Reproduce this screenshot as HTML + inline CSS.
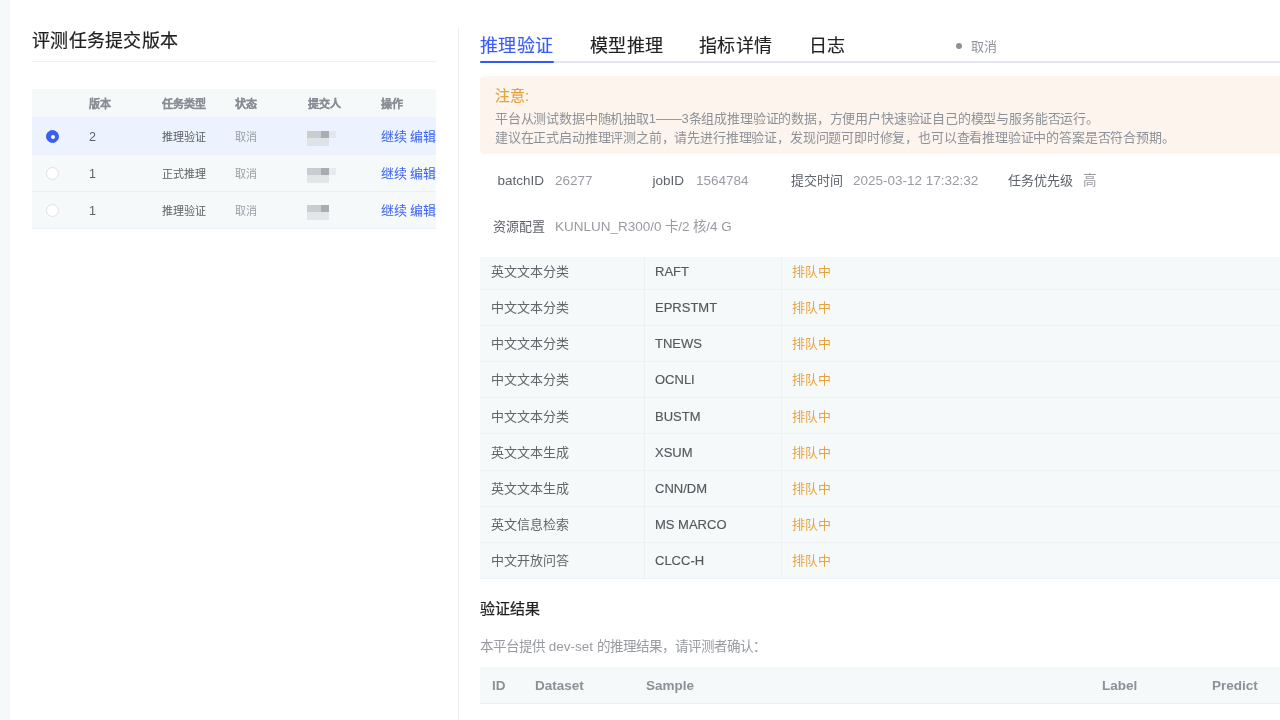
<!DOCTYPE html>
<html lang="zh-CN"><head><meta charset="utf-8">
<style>
*{margin:0;padding:0;box-sizing:border-box}
html,body{width:1280px;height:720px;overflow:hidden;background:#fff;font-family:"Liberation Sans",sans-serif}
.a{position:absolute;white-space:nowrap}
#strip{left:0;top:0;width:10px;height:720px;background:#f5f9fa}
#vdiv{left:458px;top:27px;width:1px;height:693px;background:#eceef1}
.title{left:32px;top:30px;font-size:18px;line-height:22px;color:#1f1f1f;letter-spacing:0.3px;-webkit-text-stroke:0.2px #1f1f1f}
.hline{left:32px;top:61px;width:404px;height:1px;background:#eef0f3}
.lt{left:32px;width:404px;overflow:hidden}
.lth{top:89px;height:29px;background:#f6f9fa;border-bottom:1px solid #eef1f5}
.lth span{position:absolute;top:7.5px;font-size:11px;line-height:14px;color:#8a8e96;font-weight:bold;-webkit-text-stroke:0.25px #8a8e96}
.lr{height:37px;background:#f6f9fa;border-bottom:1px solid #eef1f4}
.lr.sel{background:#ecf3fe}
.lr span{position:absolute;top:11.5px;font-size:11px;line-height:14px;color:#5d6066}
.lr .c{color:#9a9da3}
.lr .lk{color:#3b62f4;font-size:13px;top:10px;line-height:17px;word-spacing:-0.7px}
.radio{position:absolute;left:14px;top:12px;width:13px;height:13px;border-radius:50%;border:1px solid #dfe2e6;background:#fff}
.radio.on{background:#3a5ff0;border-color:#3a5ff0}
.radio.on:after{content:"";position:absolute;left:3.5px;top:3.5px;width:4px;height:4px;border-radius:50%;background:#fff}
.blur{position:absolute;left:275px;top:13px;width:29px;height:15px}
.blur i{position:absolute;display:block}

.tab{top:34px;font-size:18px;line-height:24px;color:#222;letter-spacing:0.4px;-webkit-text-stroke:0.15px #222}
.tab.on{color:#3a5cf4;-webkit-text-stroke:0.15px #3a5cf4}
#tabline{left:480px;top:61px;width:800px;height:2px;background:#e3e6ee}
#tabon{left:480px;top:61px;width:74px;height:2px;background:#2f5af5;border-radius:1px}
.notice{left:480px;top:76px;width:820px;height:78px;background:#fdf5ed;border-radius:4px}
.n1{left:495px;top:85.5px;font-size:15px;line-height:19px;color:#e9a23b;-webkit-text-stroke:0.2px #e9a23b}
.n2{left:495px;top:109px;font-size:13px;line-height:19px;color:#8e9198;letter-spacing:-0.18px}
.lab{font-size:13.5px;line-height:18px;color:#5f636a;top:172px}
.val{font-size:13.5px;line-height:18px;color:#989ba1;top:172px}
.rt{left:480px;top:256.6px;width:800px;height:321.4px;background:#f6f9fa;overflow:hidden}
.rt span{position:absolute;font-size:13px;line-height:18px;color:#626569}
.rb{position:absolute;left:0;width:800px;height:1px;background:#eef1f4}
.rbb{left:480px;width:800px;height:1px;background:#edf0f4}
.rt .q{color:#e8a33d}
.rt .en{color:#55585d;-webkit-text-stroke:0.15px #55585d}
.cd{position:absolute;top:0;width:1px;height:322px;background:#edf0f4}
.h2{left:480px;top:599px;font-size:15px;line-height:20px;color:#1f1f1f;-webkit-text-stroke:0.25px #1f1f1f}
.sub{left:480px;top:638px;font-size:13.5px;line-height:18px;color:#989ba1}
.rth{left:480px;top:667px;width:800px;height:37px;background:#f6f9fa;border-bottom:1px solid #eef0f4}
.rth span{position:absolute;top:10px;font-size:13.5px;line-height:18px;color:#8c9098;font-weight:bold}
</style></head><body>
<div id="wrap" style="position:absolute;left:0;top:0;width:1280px;height:720px;will-change:transform">
<div class="a" id="strip"></div>
<div class="a" id="vdiv"></div>

<div class="a title">评测任务提交版本</div>
<div class="a hline"></div>

<div class="a lt lth">
  <span style="left:57px">版本</span>
  <span style="left:130px">任务类型</span>
  <span style="left:203px">状态</span>
  <span style="left:276px">提交人</span>
  <span style="left:349px">操作</span>
</div>
<div class="a lt" style="top:118px">
  <div class="lr sel" style="position:relative">
    <div class="radio on"></div>
    <span style="left:57px;font-size:12.5px;top:11.5px">2</span>
    <span style="left:130px">推理验证</span>
    <span class="c" style="left:203px">取消</span>
    <div class="blur"><i style="left:0;top:0;width:14px;height:7px;background:#c9ccd1"></i><i style="left:14px;top:0;width:8px;height:7px;background:#a9acb1"></i><i style="left:22px;top:0;width:7px;height:7px;background:#e3e6ea"></i><i style="left:0;top:7px;width:22px;height:8px;background:#dfe2e6"></i></div>
    <span class="lk" style="left:349px">继续 编辑</span>
  </div>
  <div class="lr" style="position:relative">
    <div class="radio"></div>
    <span style="left:57px;font-size:12.5px;top:11.5px">1</span>
    <span style="left:130px">正式推理</span>
    <span class="c" style="left:203px">取消</span>
    <div class="blur"><i style="left:0;top:0;width:14px;height:7px;background:#c9ccd1"></i><i style="left:14px;top:0;width:8px;height:7px;background:#a9acb1"></i><i style="left:22px;top:0;width:7px;height:7px;background:#e8eaed"></i><i style="left:0;top:7px;width:22px;height:8px;background:#e3e5e8"></i></div>
    <span class="lk" style="left:349px">继续 编辑</span>
  </div>
  <div class="lr" style="position:relative">
    <div class="radio"></div>
    <span style="left:57px;font-size:12.5px;top:11.5px">1</span>
    <span style="left:130px">推理验证</span>
    <span class="c" style="left:203px">取消</span>
    <div class="blur"><i style="left:0;top:0;width:14px;height:7px;background:#c9ccd1"></i><i style="left:14px;top:0;width:8px;height:7px;background:#a9acb1"></i><i style="left:0;top:7px;width:22px;height:8px;background:#e3e5e8"></i></div>
    <span class="lk" style="left:349px">继续 编辑</span>
  </div>
</div>

<div class="a" id="tabline"></div>
<div class="a" id="tabon"></div>
<div class="a tab on" style="left:480px">推理验证</div>
<div class="a tab" style="left:590px">模型推理</div>
<div class="a tab" style="left:699px">指标详情</div>
<div class="a tab" style="left:809px">日志</div>
<div class="a" style="left:956px;top:43px;width:6px;height:6px;border-radius:50%;background:#8e9198"></div>
<div class="a" style="left:971px;top:37.5px;font-size:13px;line-height:17px;color:#8e9198">取消</div>

<div class="a notice"></div>
<div class="a n1">注意:</div>
<div class="a n2">平台从测试数据中随机抽取1——3条组成推理验证的数据，方便用户快速验证自己的模型与服务能否运行。<br>建议在正式启动推理评测之前，请先进行推理验证，发现问题可即时修复，也可以查看推理验证中的答案是否符合预期。</div>

<div class="a lab" style="right:736px">batchID</div>
<div class="a val" style="left:555px">26277</div>
<div class="a lab" style="right:596px">jobID</div>
<div class="a val" style="left:696px">1564784</div>
<div class="a lab" style="left:791px;font-size:13px">提交时间</div>
<div class="a val" style="left:853px">2025-03-12 17:32:32</div>
<div class="a lab" style="left:1008px;font-size:13px">任务优先级</div>
<div class="a val" style="left:1083px">高</div>
<div class="a lab" style="right:735px;top:218px;font-size:13px">资源配置</div>
<div class="a val" style="left:555px;top:218px">KUNLUN_R300/0 卡/2 核/4 G</div>

<div class="a rt">
  <span style="left:11px;top:6.4px">英文文本分类</span><span class="en" style="left:175px;top:6.4px">RAFT</span><span class="q" style="left:312px;top:6.4px">排队中</span>
  <span style="left:11px;top:42.5px">中文文本分类</span><span class="en" style="left:175px;top:42.5px">EPRSTMT</span><span class="q" style="left:312px;top:42.5px">排队中</span>
  <span style="left:11px;top:78.7px">中文文本分类</span><span class="en" style="left:175px;top:78.7px">TNEWS</span><span class="q" style="left:312px;top:78.7px">排队中</span>
  <span style="left:11px;top:114.8px">中文文本分类</span><span class="en" style="left:175px;top:114.8px">OCNLI</span><span class="q" style="left:312px;top:114.8px">排队中</span>
  <span style="left:11px;top:151.0px">中文文本分类</span><span class="en" style="left:175px;top:151.0px">BUSTM</span><span class="q" style="left:312px;top:151.0px">排队中</span>
  <span style="left:11px;top:187.1px">英文文本生成</span><span class="en" style="left:175px;top:187.1px">XSUM</span><span class="q" style="left:312px;top:187.1px">排队中</span>
  <span style="left:11px;top:223.3px">英文文本生成</span><span class="en" style="left:175px;top:223.3px">CNN/DM</span><span class="q" style="left:312px;top:223.3px">排队中</span>
  <span style="left:11px;top:259.4px">英文信息检索</span><span class="en" style="left:175px;top:259.4px">MS MARCO</span><span class="q" style="left:312px;top:259.4px">排队中</span>
  <span style="left:11px;top:295.6px">中文开放问答</span><span class="en" style="left:175px;top:295.6px">CLCC-H</span><span class="q" style="left:312px;top:295.6px">排队中</span>
  <div class="rb" style="top:32.4px"></div>
  <div class="rb" style="top:68.4px"></div>
  <div class="rb" style="top:104.4px"></div>
  <div class="rb" style="top:140.4px"></div>
  <div class="rb" style="top:176.4px"></div>
  <div class="rb" style="top:213.4px"></div>
  <div class="rb" style="top:249.4px"></div>
  <div class="rb" style="top:285.4px"></div>
  <div class="cd" style="left:164px"></div>
  <div class="cd" style="left:301px"></div>
</div>
<div class="a rbb" style="top:578px"></div>

<div class="a h2">验证结果</div>
<div class="a sub">本平台提供 dev-set 的推理结果，请评测者确认：</div>
<div class="a rth">
  <span style="left:12px">ID</span>
  <span style="left:55px">Dataset</span>
  <span style="left:166px">Sample</span>
  <span style="left:622px">Label</span>
  <span style="left:732px">Predict</span>
</div>
</div>
</body></html>
